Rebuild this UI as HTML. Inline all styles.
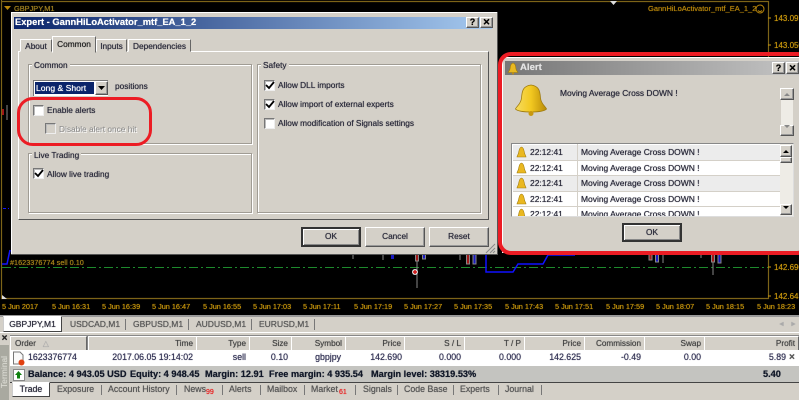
<!DOCTYPE html>
<html><head><meta charset="utf-8">
<style>
html,body{margin:0;padding:0;background:#d4d0c8}
#r{position:relative;width:799px;height:400px;overflow:hidden;background:#d4d0c8;font:8.300px/13px "Liberation Sans",sans-serif;color:#2a2a3a;text-shadow:0 0 .6px currentColor}
#r div{position:absolute;white-space:nowrap}
.cb{width:9px;height:9px;background:#fff;border:1px solid;border-color:#777 #eee #eee #777;box-shadow:inset 1px 1px 0 #bbb}
.gb{border:1px solid #a09c94;box-shadow:1px 1px 0 #fff,inset 1px 1px 0 #fff}
.gl{background:#d4d0c8;padding:0 2px}
.btn{background:#d4d0c8;border:1px solid;border-color:#fff #555 #555 #fff;box-shadow:inset -1px -1px 0 #999;text-align:center;box-sizing:border-box}
.def{border:2px solid #333;box-shadow:inset 1px 1px 0 #fff,inset -1px -1px 0 #888}
.hd{top:336px;height:13px;background:#d4d0c8;border:1px solid;border-color:#fff #666 #888 #fff;text-align:right;padding:0 3px;color:#444;font-size:8.200px}
.cell{top:350px;height:15px;background:#fff;text-align:right;line-height:15px;color:#333355;font-size:8.800px}
.sep{width:1px;background:#777}
.tl{top:300px;color:#c8960c;font-size:7.300px}
.p{color:#c8960c;left:774px;font-size:8px}
.tb{background:#d4d0c8;border:1px solid;border-color:#fff #666 #d4d0c8 #fff;box-sizing:border-box;text-align:center}
.mt{font-size:8.500px;color:#555;top:317px;line-height:15px}
.bt{font-size:8.800px;color:#555;top:383px;line-height:13px}
.bal{top:366px;font:bold 9.200px/16px "Liberation Sans",sans-serif;color:#111828}
.li{font-size:8.450px;line-height:15px}
.red{top:388px;color:#e82020;font-size:7px;line-height:10px}
</style></head><body>
<div id="r">
<div style="left:0;top:0;width:799px;height:315px;background:#000"></div>
<svg style="position:absolute;left:0;top:0" width="799" height="315">
<g fill="none">
<path d="M1.500 0V298.500H768.500V1.500H1.500" stroke="#7d6418" stroke-width="1.200"/>
<path d="M2 267.500H768" stroke="#1d8a2c" stroke-dasharray="9 3 2 3"/>
<path d="M2 264H7L10 250" stroke="#1414ff" stroke-width="1.500"/>
<path d="M3 208.500H9" stroke="#1414ff" stroke-dasharray="3 2"/>
<path d="M486 250V272H513L518 264H543L548 255H575" stroke="#1010ff" stroke-width="1.500"/>
<path d="M353 254V259M383 254V260M417 254V288M460 254V260M663 254V263M650 254V258M701 254V258M713 254V275M7 105V120" stroke="#888"/>
<path d="M768 18H771M768 45H771M768 267H771M768 296H771" stroke="#c8960c"/>
</g>
<rect x="2" y="109" width="2" height="6" fill="#a01818"/>
<g stroke-width="1">
<rect x="415.500" y="254" width="3" height="7" fill="#a01818" stroke="#888"/>
<rect x="422.500" y="254" width="3" height="5" fill="#1818c0" stroke="#888"/>
<rect x="391" y="254" width="3" height="5" fill="#1818c0"/>
<rect x="466.500" y="254" width="3" height="10" fill="#a01818" stroke="#888"/>
<rect x="473" y="254" width="3" height="10" fill="#1818c0" stroke="#888"/>
<rect x="649" y="254" width="3" height="6" fill="#a01818" stroke="#888"/>
<rect x="655.500" y="254" width="3" height="8" fill="#1818c0" stroke="#888"/>
<rect x="711.500" y="254" width="3" height="8" fill="#a01818" stroke="#888"/>
<rect x="718" y="254" width="3" height="9" fill="#1818c0" stroke="#888"/>
</g>
<circle cx="415" cy="272" r="3" fill="#ddd"/><path d="M413 272H417M415 270V274" stroke="#d01010" stroke-width="1.500"/>
<path d="M4 6H11L7.500 10Z" fill="#b8860b"/>
<path d="M610 1H617L613.500 5Z" fill="#ddd"/>
<path d="M2 295V299H7Z" fill="#ddd"/>
<circle cx="760" cy="9" r="4" fill="none" stroke="#b8860b"/>
<path d="M758 10.500Q760 12.500 762 10.500" fill="none" stroke="#b8860b"/>
</svg>
<div style="left:14px;top:2px;color:#a08020;font-size:7.400px">GBPJPY,M1</div>
<div style="left:648px;top:2px;color:#b8860b;font-size:7.500px">GannHiLoActivator_mtf_EA_1_2</div>
<div style="left:10px;top:256px;color:#a8841a;font-size:7.300px">#1623376774 sell 0.10</div>
<div class="p" style="top:12px">143.095</div><div class="p" style="top:39px">143.050</div>
<div class="p" style="top:261px">142.690</div><div class="p" style="top:290px">142.645</div>

<div class="tl" style="left:2px">5 Jun 2017</div><div class="tl" style="left:52px">5 Jun 16:31</div><div class="tl" style="left:102px">5 Jun 16:39</div><div class="tl" style="left:152px">5 Jun 16:47</div><div class="tl" style="left:203px">5 Jun 16:55</div><div class="tl" style="left:253px">5 Jun 17:03</div><div class="tl" style="left:303px">5 Jun 17:11</div><div class="tl" style="left:354px">5 Jun 17:19</div><div class="tl" style="left:404px">5 Jun 17:27</div><div class="tl" style="left:454px">5 Jun 17:35</div><div class="tl" style="left:505px">5 Jun 17:43</div><div class="tl" style="left:555px">5 Jun 17:51</div><div class="tl" style="left:606px">5 Jun 17:59</div><div class="tl" style="left:656px">5 Jun 18:07</div><div class="tl" style="left:706px">5 Jun 18:15</div><div class="tl" style="left:757px">5 Jun 18:23</div>

<!-- Expert dialog -->
<div style="left:11px;top:12px;width:486px;height:242px;background:#d4d0c8;border-right:1px solid #555;border-bottom:1px solid #555;box-shadow:inset 1px 1px 0 #fff"></div>
<div style="left:14px;top:17px;width:478px;height:12px;background:linear-gradient(90deg,#0a246a,#a6caf0)"></div>
<div style="left:15px;top:15px;color:#fff;font:bold 9.350px/15px 'Liberation Sans',sans-serif">Expert - GannHiLoActivator_mtf_EA_1_2</div>
<div class="btn" style="left:466px;top:17px;width:13px;height:11px;font:bold 9px/9px 'Liberation Sans',sans-serif;color:#000">?</div>
<div class="btn" style="left:480px;top:17px;width:13px;height:11px;font:bold 9px/9px 'Liberation Sans',sans-serif;color:#000">✕</div>

<div style="left:18px;top:51px;width:469px;height:167px;border:1px solid;border-color:#fff #555 #555 #fff"></div>
<div class="tb" style="left:20px;top:39px;width:32px;height:13px;line-height:12px">About</div>
<div class="tb" style="left:52px;top:36px;width:44px;height:17px;line-height:15px;color:#222">Common</div>
<div class="tb" style="left:96px;top:39px;width:31px;height:13px;line-height:12px">Inputs</div>
<div class="tb" style="left:128px;top:39px;width:63px;height:13px;line-height:12px">Dependencies</div>

<div class="gb" style="left:28px;top:64px;width:222px;height:78px"></div><div class="gl" style="left:32px;top:59px">Common</div>
<div class="gb" style="left:28px;top:153px;width:222px;height:58px"></div><div class="gl" style="left:32px;top:149px">Live Trading</div>
<div class="gb" style="left:257px;top:64px;width:222px;height:147px"></div><div class="gl" style="left:261px;top:59px">Safety</div>

<div style="left:33px;top:80px;width:75px;height:16px;background:#fff;box-shadow:inset 1px 1px 0 #777"></div>
<div style="left:35px;top:82px;width:59px;height:12px;background:#0a246a;color:#fff;line-height:12px;padding-left:1px;box-sizing:border-box;font-size:8.600px">Long &amp; Short</div>
<div class="btn" style="left:95px;top:81px;width:13px;height:14px"></div>
<svg style="position:absolute;left:98px;top:86px" width="8" height="5"><path d="M0 0H7L3.500 4Z" fill="#000"/></svg>
<div style="left:115px;top:80px">positions</div>

<div class="cb" style="left:33px;top:105px"></div><div style="left:47px;top:104px">Enable alerts</div>
<div class="cb" style="left:45px;top:123px;background:#d4d0c8"></div><div style="left:59px;top:123px;color:#888;text-shadow:1px 1px 0 #fff">Disable alert once hit</div>
<div class="cb" style="left:33px;top:168px"></div><div style="left:47px;top:168px">Allow live trading</div>
<div class="cb" style="left:264px;top:80px"></div><div style="left:278px;top:79px">Allow DLL imports</div>
<div class="cb" style="left:264px;top:99px"></div><div style="left:278px;top:98px">Allow import of external experts</div>
<div class="cb" style="left:264px;top:118px"></div><div style="left:278px;top:117px">Allow modification of Signals settings</div>
<svg style="position:absolute;left:0;top:0" width="300" height="200"><g fill="none" stroke="#000" stroke-width="1.800"><path d="M35 173L38 176L43 170"/><path d="M266 85L269 88L274 82"/><path d="M266 104L269 107L274 101"/></g></svg>

<div class="btn def" style="left:301px;top:227px;width:60px;height:20px;line-height:15px">OK</div>
<div class="btn" style="left:365px;top:227px;width:60px;height:20px;line-height:17px">Cancel</div>
<div class="btn" style="left:429px;top:227px;width:60px;height:20px;line-height:17px">Reset</div>
<svg style="position:absolute;left:484px;top:243px" width="12" height="11"><path d="M2 10L11 1M6 10L11 5M9 10L11 8" stroke="#888"/></svg>

<div style="left:17px;top:97px;width:135px;height:49px;border:3.500px solid #ec1c24;border-radius:16px;box-sizing:border-box"></div>

<!-- Alert dialog -->
<div style="left:502px;top:57px;width:297px;height:196px;background:#d4d0c8;box-shadow:inset 1px 1px 0 #fff"></div>
<div style="left:505px;top:61px;width:294px;height:14px;background:linear-gradient(90deg,#777,#c4c4c4)"></div>
<svg style="position:absolute;left:507px;top:62px" width="12" height="13"><path d="M6 1C3 2 3.500 5 3 7C2.500 9 1 10 1 10.500H11C11 10 9.500 9 9 7C8.500 5 9 2 6 1Z" fill="#e8b820" stroke="#9a7a10" stroke-width=".6"/><circle cx="6" cy="11.500" r="1" fill="#c09010"/></svg>
<div style="left:520px;top:61px;color:#e4e4e4;font:bold 9.600px/14px 'Liberation Sans',sans-serif">Alert</div>
<div class="btn" style="left:772px;top:62px;width:13px;height:12px;font:bold 9px/10px 'Liberation Sans',sans-serif;color:#000">?</div>
<div class="btn" style="left:786px;top:62px;width:13px;height:12px;font:bold 9px/10px 'Liberation Sans',sans-serif;color:#000">✕</div>
<svg style="position:absolute;left:513px;top:83px" width="36" height="34"><defs><linearGradient id="g" x1="0" x2="1"><stop offset="0" stop-color="#f6dc60"/><stop offset=".5" stop-color="#f2c820"/><stop offset="1" stop-color="#b88a08"/></linearGradient></defs><path d="M18 2C10 3 9 8 8.500 15C8 21 3 24 2.500 26C6 30 30 30 33.500 26C33 24 28 21 27.500 15C27 8 26 3 18 2Z" fill="url(#g)" stroke="#a07c10" stroke-width=".8"/><circle cx="18" cy="30.500" r="2.500" fill="#c89810"/></svg>
<div style="left:560px;top:87px;font-size:8.400px">Moving Average Cross DOWN !</div>
<div class="btn" style="left:780px;top:88px;width:14px;height:12px;color:#888"></div>
<div style="left:781px;top:100px;width:12px;height:25px;background:#eeece6"></div>
<div class="btn" style="left:780px;top:125px;width:14px;height:11px"></div>
<svg style="position:absolute;left:783px;top:92px" width="9" height="40"><path d="M1 4H7L4 1ZM1 33H7L4 36Z" fill="#888"/></svg>

<div style="left:511px;top:143px;width:283px;height:74px;background:#fff;border:1px solid;border-color:#888 #ddd #ddd #888;box-sizing:border-box;overflow:hidden">
<div style="left:1px;top:1px;width:267px;height:15px;background:#ececec;border-bottom:1px solid #d4d0c8"></div>
<div style="left:1px;top:32px;width:267px;height:15px;background:#ececec;border-bottom:1px solid #d4d0c8"></div>
<div style="left:1px;top:16px;width:267px;height:15px;border-bottom:1px solid #d4d0c8"></div>
<div style="left:1px;top:47px;width:267px;height:15px;border-bottom:1px solid #d4d0c8"></div>
<div style="left:65px;top:0;width:1px;height:74px;background:#d4d0c8"></div>
<div class="li" style="left:18px;top:1px">22:12:41</div><div class="li" style="left:69px;top:1px">Moving Average Cross DOWN !</div>
<div class="li" style="left:18px;top:17px">22:12:41</div><div class="li" style="left:69px;top:17px">Moving Average Cross DOWN !</div>
<div class="li" style="left:18px;top:32px">22:12:41</div><div class="li" style="left:69px;top:32px">Moving Average Cross DOWN !</div>
<div class="li" style="left:18px;top:48px">22:12:41</div><div class="li" style="left:69px;top:48px">Moving Average Cross DOWN !</div>
<div class="li" style="left:18px;top:63px">22:12:41</div><div class="li" style="left:69px;top:63px">Moving Average Cross DOWN !</div>
<svg style="position:absolute;left:4px;top:1px" width="11" height="72"><g fill="#eab820" stroke="#a07c10" stroke-width=".6"><path d="M5.500 2C3 2.500 3 6 2.500 8C2 10 1 11 1 12H10C10 11 9 10 8.500 8C8 6 8 2.500 5.500 2Z"/><path transform="translate(0,16)" d="M5.500 2C3 2.500 3 6 2.500 8C2 10 1 11 1 12H10C10 11 9 10 8.500 8C8 6 8 2.500 5.500 2Z"/><path transform="translate(0,31)" d="M5.500 2C3 2.500 3 6 2.500 8C2 10 1 11 1 12H10C10 11 9 10 8.500 8C8 6 8 2.500 5.500 2Z"/><path transform="translate(0,47)" d="M5.500 2C3 2.500 3 6 2.500 8C2 10 1 11 1 12H10C10 11 9 10 8.500 8C8 6 8 2.500 5.500 2Z"/><path transform="translate(0,62)" d="M5.500 2C3 2.500 3 6 2.500 8C2 10 1 11 1 12H10C10 11 9 10 8.500 8C8 6 8 2.500 5.500 2Z"/></g></svg>
<div style="left:268px;top:0;width:13px;height:72px;background:#eeece6"></div>
<div class="btn" style="left:268px;top:1px;width:12px;height:12px"></div>
<div class="btn" style="left:268px;top:13px;width:12px;height:6px"></div>
<div class="btn" style="left:268px;top:60px;width:12px;height:11px"></div>
<svg style="position:absolute;left:270px;top:4px" width="9" height="64"><path d="M1 5H7L4 2ZM1 58H7L4 61Z" fill="#000"/></svg>
</div>
<div class="btn def" style="left:622px;top:223px;width:60px;height:19px;line-height:15px">OK</div>

<div style="left:497.500px;top:52px;width:312px;height:203px;border:4px solid #ec1c24;border-radius:13px;box-sizing:border-box"></div>

<!-- Terminal -->
<div style="left:0;top:315px;width:799px;height:2px;background:#999"></div>
<div style="left:0;top:317px;width:799px;height:85px;background:#d4d0c8"></div>
<div style="left:0;top:332px;width:799px;height:1px;background:#fff"></div>
<div style="left:3px;top:316px;width:59px;height:16px;background:#fff;border:1px solid;border-color:#fff #444 #444 #ccc;box-sizing:border-box;text-align:center;line-height:15px;font-size:8.500px">GBPJPY,M1</div>
<div class="mt" style="left:70px">USDCAD,M1</div><div class="sep" style="left:125px;top:319px;height:11px"></div>
<div class="mt" style="left:133px">GBPUSD,M1</div><div class="sep" style="left:188px;top:319px;height:11px"></div>
<div class="mt" style="left:196px">AUDUSD,M1</div><div class="sep" style="left:251px;top:319px;height:11px"></div>
<div class="mt" style="left:259px">EURUSD,M1</div><div class="sep" style="left:314px;top:319px;height:11px"></div>
<div style="left:778px;top:317px;color:#aaa;font-size:7px;line-height:15px">◄</div><div style="left:790px;top:317px;color:#aaa;font-size:7px;line-height:15px">►</div>

<div style="left:0;top:345px;width:9px;height:55px;background:#a9a9a0"></div>
<div style="left:-14px;top:366px;width:36px;height:12px;line-height:12px;color:#d8d8d0;transform:rotate(-90deg);font-size:8.500px;text-align:center">Terminal</div>
<div style="left:0;top:333px;width:9px;height:12px;color:#222;font:bold 10px/12px 'Liberation Sans',sans-serif;text-align:center">×</div>

<div style="left:10px;top:335px;width:789px;height:15px;background:#888"></div>
<div class="hd" style="left:10px;width:71px;text-align:left;padding-left:4px;padding-right:0">Order &nbsp;&nbsp;<span style="color:#aaa">△</span></div>
<div class="hd" style="left:88px;width:101px">Time</div>
<div class="hd" style="left:196px;width:46px">Type</div>
<div class="hd" style="left:249px;width:35px">Size</div>
<div class="hd" style="left:291px;width:47px">Symbol</div>
<div class="hd" style="left:345px;width:52px">Price</div>
<div class="hd" style="left:404px;width:53px">S / L</div>
<div class="hd" style="left:464px;width:53px">T / P</div>
<div class="hd" style="left:524px;width:53px">Price</div>
<div class="hd" style="left:584px;width:53px">Commission</div>
<div class="hd" style="left:644px;width:53px">Swap</div>
<div class="hd" style="left:704px;width:87px">Profit</div>

<div style="left:10px;top:350px;width:789px;height:16px;background:#fff"></div>
<svg style="position:absolute;left:12px;top:351px" width="14" height="15"><path d="M1.500 1H8L11 4V13H1.500Z" fill="#fafafa" stroke="#777"/><circle cx="9.500" cy="11.500" r="3" fill="#e04010"/></svg>
<div class="cell" style="left:28px;width:48px;text-align:left">1623376774</div>
<div class="cell" style="left:88px;width:105px">2017.06.05 19:14:02</div>
<div class="cell" style="left:196px;width:50px">sell</div>
<div class="cell" style="left:249px;width:39px">0.10</div>
<div class="cell" style="left:291px;width:50px">gbpjpy</div>
<div class="cell" style="left:345px;width:57px">142.690</div>
<div class="cell" style="left:404px;width:57px">0.000</div>
<div class="cell" style="left:464px;width:57px">0.000</div>
<div class="cell" style="left:524px;width:57px">142.625</div>
<div class="cell" style="left:584px;width:57px">-0.49</div>
<div class="cell" style="left:644px;width:57px">0.00</div>
<div class="cell" style="left:704px;width:82px">5.89</div>
<div style="left:789px;top:350px;line-height:15px;color:#555;font-weight:bold;font-size:10px">×</div>

<div style="left:10px;top:366px;width:789px;height:16px;background:#c4c4c0;border-bottom:1px solid #444"></div>
<div style="left:13px;top:369px;width:10px;height:10px;background:#fff;border:1px solid #888"></div>
<svg style="position:absolute;left:14px;top:370px" width="10" height="10"><path d="M4.500 1L8 5H6V8.500H3V5H1Z" fill="#108010"/></svg>
<div class="bal" style="left:28px">Balance: 4 943.05 USD</div>
<div class="bal" style="left:130px">Equity: 4 948.45</div>
<div class="bal" style="left:205px">Margin: 12.91</div>
<div class="bal" style="left:269px">Free margin: 4 935.54</div>
<div class="bal" style="left:371px">Margin level: 38319.53%</div>
<div class="bal" style="left:763px">5.40</div>

<div style="left:12px;top:382px;width:38px;height:15px;background:#fff;border:1px solid;border-color:#fff #444 #444 #ccc;box-sizing:border-box;text-align:center;line-height:13px;font-size:8.800px">Trade</div>
<div class="bt" style="left:57px">Exposure</div><div class="sep" style="left:101px;top:385px;height:10px"></div>
<div class="bt" style="left:108px">Account History</div><div class="sep" style="left:176px;top:385px;height:10px"></div>
<div class="bt" style="left:184px">News</div><div class="red" style="left:206px">99</div><div class="sep" style="left:222px;top:385px;height:10px"></div>
<div class="bt" style="left:229px">Alerts</div><div class="sep" style="left:260px;top:385px;height:10px"></div>
<div class="bt" style="left:267px">Mailbox</div><div class="sep" style="left:304px;top:385px;height:10px"></div>
<div class="bt" style="left:311px">Market</div><div class="red" style="left:339px">61</div><div class="sep" style="left:355px;top:385px;height:10px"></div>
<div class="bt" style="left:363px">Signals</div><div class="sep" style="left:397px;top:385px;height:10px"></div>
<div class="bt" style="left:404px">Code Base</div><div class="sep" style="left:453px;top:385px;height:10px"></div>
<div class="bt" style="left:460px">Experts</div><div class="sep" style="left:498px;top:385px;height:10px"></div>
<div class="bt" style="left:505px">Journal</div><div class="sep" style="left:541px;top:385px;height:10px"></div>
</div>
</body></html>
